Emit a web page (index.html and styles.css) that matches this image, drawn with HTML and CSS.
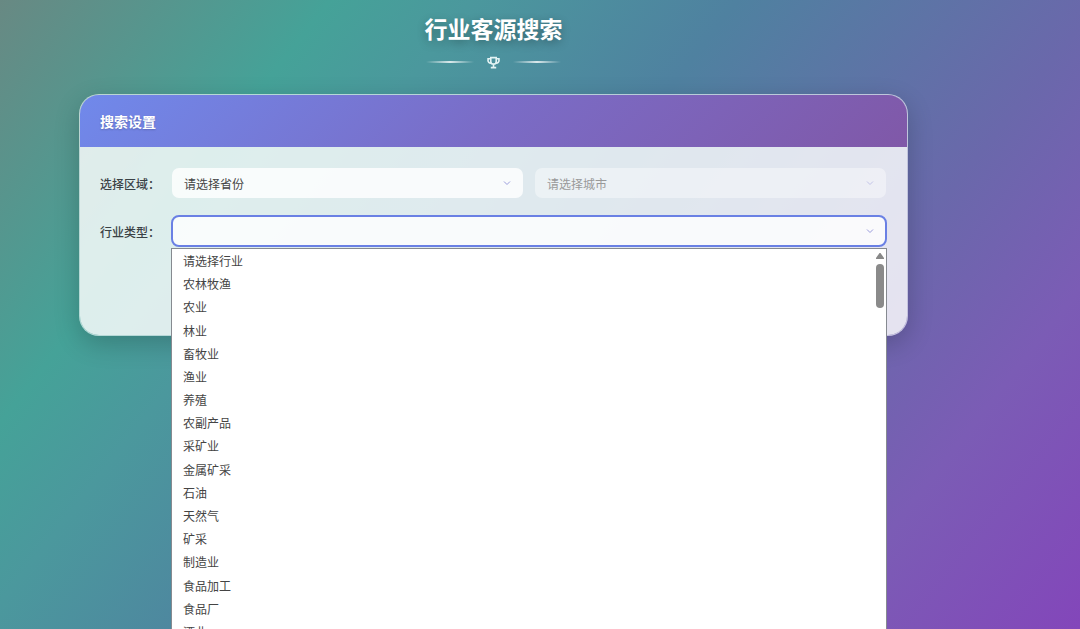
FILE: index.html
```html
<!DOCTYPE html>
<html lang="zh-CN">
    <head>
        <title>行业客源搜索</title>
        <meta charset="utf-8"/>
        <link rel="stylesheet" href="styles.css">
    </head>
    <body>
        <div class="container">
            <header class="page-header">
                <h1>行业客源搜索</h1>
                <div class="divider">
                    <span class="line"></span>
                    <svg class="trophy" viewBox="0 0 24 24" aria-hidden="true">
                        <path d="M7 3h10v7a5 5 0 0 1-10 0zM7 5H2v2a5 5 0 0 0 6 6M17 5h5v2a5 5 0 0 1-6 6M12 15v6M7 21.500h10"/>
                    </svg>
                    <span class="line"></span>
                </div>
            </header>

            <form class="card" name="SearchForm">
                <h2 class="card-header">搜索设置</h2>
                <div class="card-body">
                    <div class="form-row">
                        <label for="province">选择区域：</label>
                        <div class="field">
                            <select id="province" name="province">
                                <option>请选择省份</option>
                            </select>
                            <svg class="arrow" viewBox="0 0 8 8" aria-hidden="true"><path d="M1 2.500l3 3 3-3"/></svg>
                        </div>
                        <div class="field disabled">
                            <select id="city" name="city" aria-label="城市" disabled>
                                <option>请选择城市</option>
                            </select>
                            <svg class="arrow" viewBox="0 0 8 8" aria-hidden="true"><path d="M1 2.500l3 3 3-3"/></svg>
                        </div>
                    </div>

                    <div class="form-row">
                        <label for="industry">行业类型：</label>
                        <div class="field open">
                            <select id="industry" name="industry">
                                <option value=""></option>
                            </select>
                            <svg class="arrow" viewBox="0 0 8 8" aria-hidden="true"><path d="M1 2.500l3 3 3-3"/></svg>
                            <div class="dropdown">
                                <ul class="options" role="listbox" aria-label="行业类型">
                                    <li role="option">请选择行业</li>
                                    <li role="option">农林牧渔</li>
                                    <li role="option">农业</li>
                                    <li role="option">林业</li>
                                    <li role="option">畜牧业</li>
                                    <li role="option">渔业</li>
                                    <li role="option">养殖</li>
                                    <li role="option">农副产品</li>
                                    <li role="option">采矿业</li>
                                    <li role="option">金属矿采</li>
                                    <li role="option">石油</li>
                                    <li role="option">天然气</li>
                                    <li role="option">矿采</li>
                                    <li role="option">制造业</li>
                                    <li role="option">食品加工</li>
                                    <li role="option">食品厂</li>
                                    <li role="option">酒业</li>
                                </ul>
                                <div class="scrollbar">
                                    <svg viewBox="0 0 8 6" aria-hidden="true"><path d="M3.500 0h1L8 5v1H0V5z"/></svg>
                                    <span class="thumb"></span>
                                </div>
                            </div>
                        </div>
                    </div>
                </div>
            </form>
        </div>
    </body>
</html>
```
FILE: styles.css
```css
* {
  box-sizing: border-box;
}

body {
  margin: 0;
  height: 100vh;
  overflow: hidden;
  font-family: "Noto Sans CJK SC", "Noto Sans", sans-serif;
  font-size: 12px;
  color: #3a4145;
  background: linear-gradient(128deg, #688983 0%, #45a298 21%, #4b989d 30%, #4f81a0 47%, #6a68ab 70%, #7b5cb5 83%, #8346ba 100%);
}

.container {
  padding: 10px 172px 0 79px;
}

.page-header {
  display: flex;
  flex-direction: column;
  align-items: center;
}

h1 {
  margin: 0;
  font-size: 23px;
  line-height: 36px;
  color: #fff;
  text-shadow: 0 3px 10px rgba(0, 0, 0, 0.3);
}

.divider {
  display: flex;
  align-items: center;
  gap: 13px;
  height: 14px;
  margin-top: 9px;
}

.line {
  width: 48px;
  height: 2px;
  background: linear-gradient(90deg, transparent, rgba(255, 255, 255, 0.8), transparent);
}

.trophy {
  width: 13px;
  height: 13px;
  fill: none;
  stroke: #e3f3f4;
  stroke-width: 3;
}

.card {
  margin-top: 25px;
  border: 1px solid rgba(255, 255, 255, 0.6);
  border-radius: 20px;
  background: rgba(255, 255, 255, 0.82);
  background-clip: padding-box;
  box-shadow: 0 8px 26px rgba(0, 0, 0, 0.2);
}

.card-header {
  margin: 0;
  padding: 0 20px;
  border-radius: 19px 19px 0 0;
  font-size: 14px;
  line-height: 52px;
  color: #fff;
  text-shadow: 0 1px 2px rgba(0, 0, 0, 0.2);
  background: linear-gradient(135deg, #7089eb 0%, #7a6cc6 50%, #8058a8 100%);
}

.card-body {
  display: flex;
  flex-direction: column;
  gap: 18px;
  padding: 21px 21px 89px 20px;
}

.form-row {
  display: flex;
  align-items: center;
  gap: 12px;
}

label {
  width: 60px;
  font-weight: 500;
  white-space: nowrap;
}

.field {
  position: relative;
  flex: 1;
}

select {
  display: block;
  width: 100%;
  height: 30px;
  padding: 0 12px;
  border: none;
  border-radius: 7px;
  appearance: none;
  font: inherit;
  color: #444;
  background: rgba(255, 255, 255, 0.8);
}

.disabled select {
  color: #999;
  opacity: 1;
  background: rgba(255, 255, 255, 0.4);
}

.open select {
  outline: 2px solid #6a80e4;
  outline-offset: -1px;
}

.arrow {
  position: absolute;
  top: 11px;
  right: 12px;
  width: 8px;
  height: 8px;
  fill: none;
  stroke: #9a9cdc;
}

.disabled .arrow {
  opacity: 0.5;
}

.dropdown {
  position: absolute;
  top: 32px;
  left: -1px;
  right: -1px;
  display: flex;
  border: 1px solid #868a90;
  color: #444;
  background: #fff;
}

.options {
  flex: 1;
  display: grid;
  grid-template-rows: repeat(17, 1fr);
  align-items: center;
  height: 394px;
  margin: 0;
  padding: 0 11px;
  list-style: none;
}

.scrollbar {
  display: flex;
  flex-direction: column;
  align-items: center;
  gap: 5px;
  width: 12px;
  padding-top: 4px;
}

.scrollbar svg {
  width: 8px;
  height: 6px;
  fill: #888;
}

.thumb {
  width: 8px;
  height: 44px;
  border-radius: 4px;
  background: #8a8a8a;
}
```
